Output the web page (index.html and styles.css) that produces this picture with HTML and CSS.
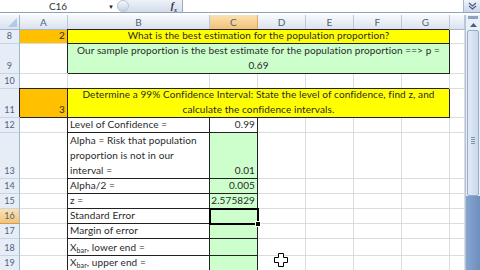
FILE: index.html
```html
<!DOCTYPE html>
<html lang="en">
<head>
    <meta charset="UTF-8">
    <title>Confidence Interval - Excel</title>
    <link rel="stylesheet" href="styles.css">
</head>
<body>
    <div class="window">
        <div class="formula-bar">
            <div class="name-box">
                <span class="name">C16</span>
                <span class="drop">&#9660;</span>
            </div>
            <div class="fx-group">
                <span class="grip"></span>
                <span class="fx">f<sub>x</sub></span>
            </div>
            <div class="formula-input"></div>
            <div class="expand">
                <svg width="9" height="8" viewBox="0 0 9 8"><path d="M1 1l3.5 3 3.5-3M1 4l3.5 3 3.5-3" fill="none" stroke="#4a5f7e" stroke-width="1.2"/></svg>
            </div>
        </div>

        <div class="workarea">
            <div class="sheet">
                <!-- column headers -->
                <div class="corner"></div>
                <div class="ch">A</div>
                <div class="ch">B</div>
                <div class="ch sel">C</div>
                <div class="ch">D</div>
                <div class="ch">E</div>
                <div class="ch">F</div>
                <div class="ch">G</div>
                <div class="ch"></div>

                <!-- row 8 -->
                <div class="rh">8</div>
                <div class="c orange num">2</div>
                <div class="c yellow merged center"><span>What is the best estimation for the population proportion?</span></div>
                <div class="c"></div>

                <!-- row 9 -->
                <div class="rh">9</div>
                <div class="c"></div>
                <div class="c green merged center"><span>Our sample proportion is the best estimate for the population proportion ==&gt; p =<br>0.69</span></div>
                <div class="c"></div>

                <!-- row 10 -->
                <div class="rh">10</div>
                <div class="c"></div><div class="c"></div><div class="c"></div><div class="c"></div>
                <div class="c"></div><div class="c"></div><div class="c"></div><div class="c"></div>

                <!-- row 11 -->
                <div class="rh">11</div>
                <div class="c orange num boxed">3</div>
                <div class="c yellow merged center"><span>Determine a 99% Confidence Interval: State the level of confidence, find z, and<br>calculate the confidence intervals.</span></div>
                <div class="c"></div>

                <!-- row 12 -->
                <div class="rh">12</div>
                <div class="c"></div>
                <div class="c boxed">Level of Confidence =</div>
                <div class="c boxed num">0.99</div>
                <div class="c"></div><div class="c"></div><div class="c"></div><div class="c"></div><div class="c"></div>

                <!-- row 13 -->
                <div class="rh">13</div>
                <div class="c"></div>
                <div class="c boxed"><span>Alpha = Risk that population<br>proportion is not in our<br>interval =</span></div>
                <div class="c boxed green num">0.01</div>
                <div class="c"></div><div class="c"></div><div class="c"></div><div class="c"></div><div class="c"></div>

                <!-- row 14 -->
                <div class="rh">14</div>
                <div class="c"></div>
                <div class="c boxed">Alpha/2 =</div>
                <div class="c boxed green num">0.005</div>
                <div class="c"></div><div class="c"></div><div class="c"></div><div class="c"></div><div class="c"></div>

                <!-- row 15 -->
                <div class="rh">15</div>
                <div class="c"></div>
                <div class="c boxed">z =</div>
                <div class="c boxed green num">2.575829</div>
                <div class="c"></div><div class="c"></div><div class="c"></div><div class="c"></div><div class="c"></div>

                <!-- row 16 -->
                <div class="rh sel">16</div>
                <div class="c"></div>
                <div class="c boxed">Standard Error</div>
                <div class="c boxed green active"></div>
                <div class="c"></div><div class="c"></div><div class="c"></div><div class="c"></div><div class="c"></div>

                <!-- row 17 -->
                <div class="rh">17</div>
                <div class="c"></div>
                <div class="c boxed">Margin of error</div>
                <div class="c boxed green"></div>
                <div class="c"></div><div class="c"></div><div class="c"></div><div class="c"></div><div class="c"></div>

                <!-- row 18 -->
                <div class="rh">18</div>
                <div class="c"></div>
                <div class="c boxed"><span>X<sub>bar</sub>, lower end =</span></div>
                <div class="c boxed green"></div>
                <div class="c"></div><div class="c"></div><div class="c"></div><div class="c"></div><div class="c"></div>

                <!-- row 19 -->
                <div class="rh">19</div>
                <div class="c"></div>
                <div class="c boxed"><span>X<sub>bar</sub>, upper end =</span></div>
                <div class="c boxed green"></div>
                <div class="c"></div><div class="c"></div><div class="c"></div><div class="c"></div><div class="c"></div>
            </div>

            <div class="vscroll">
                <div class="split"></div>
                <div class="arrow-up">
                    <svg width="7" height="4" viewBox="0 0 7 4"><path d="M0 4L3.5 0 7 4z" fill="#4a5f7e"/></svg>
                </div>
                <div class="thumb"><span class="grip-lines"></span></div>
                <div class="track"></div>
            </div>
        </div>

        <svg class="cursor" width="14" height="14" viewBox="0 0 14 14">
            <path d="M4.5 0.5h5v4h4v5h-4v4h-5v-4h-4v-5h4z" fill="#fff" stroke="#000" stroke-width="1"/>
        </svg>
    </div>
</body>
</html>
```

FILE: styles.css
```css
body {
    margin: 0;
    background-color: #fff;
    font-family: Lato, "Liberation Sans", sans-serif;
    color: #2a2a2a;
}
.window {
    position: relative;
    width: 480px;
    height: 270px;
    overflow: hidden;
}

/* formula bar across the top */
.formula-bar {
    display: flex;
    height: 12px;
    border-bottom: 1px solid #8ea3bf;
    background-color: #fff;
}
.name-box {
    width: 117px;
    display: flex;
    align-items: center;
    font-size: 10px;
    color: #333;
}
.name-box .name {
    flex: 1;
    text-align: center;
    padding-left: 8px;
}
.name-box .drop {
    font-size: 6px;
    color: #222;
    margin-right: 3px;
}
.fx-group {
    width: 65px;
    display: flex;
    align-items: center;
    justify-content: space-between;
    background: linear-gradient(#eef2f8, #d3dcea);
    border-radius: 6px 0 0 6px;
    border-right: 1px solid #9aaac2;
}
.grip {
    width: 12px;
    height: 12px;
    border-radius: 50%;
    background: linear-gradient(#f7f9fc, #c5d0e0);
    border: 1px solid #b8c4d6;
    box-sizing: border-box;
}
.fx {
    font-family: "Liberation Serif", serif;
    font-style: italic;
    font-weight: bold;
    font-size: 10px;
    color: #333;
    margin-right: 5px;
}
.fx sub {
    font-size: 6px;
}
.formula-input {
    flex: 1;
    background-color: #fff;
}
.expand {
    width: 16px;
    display: flex;
    align-items: center;
    justify-content: center;
    background: linear-gradient(#eef3fa, #c9d7ea);
    border-left: 1px solid #a5b6cd;
}

/* grid area */
.workarea {
    display: flex;
    margin-top: 2px;
}
.sheet {
    display: grid;
    grid-template-columns: 20px 48px 142px 48px 48px 48px 48px 48px 15px;
    grid-template-rows: 15px 14px 30px 15px 29px 15px 46px 15px 15px 15px 15px 17px 15px;
    font-size: 10px;
    line-height: 15px;
    letter-spacing: 0.1px;
}
.corner {
    background: linear-gradient(#f3f6fb, #d9e2ee);
    border-right: 1px solid #9eb6ce;
    border-bottom: 1px solid #9eb6ce;
    position: relative;
}
.corner::after {
    content: "";
    position: absolute;
    right: 2px;
    bottom: 2px;
    border-left: 9px solid transparent;
    border-bottom: 9px solid #b6c9e2;
}
.ch {
    display: flex;
    align-items: center;
    justify-content: center;
    background: linear-gradient(#f7f9fc, #dbe3ef);
    border-right: 1px solid #b9c8db;
    border-bottom: 1px solid #9eb6ce;
    color: #50627f;
    font-size: 10px;
}
.ch.sel {
    background: linear-gradient(#fbe2b0, #f3c27a);
    border-right-color: #e3a95c;
    border-bottom-color: #d99a45;
}
.rh {
    display: flex;
    align-items: flex-end;
    justify-content: center;
    background-color: #e6edf7;
    border-right: 1px solid #9eb6ce;
    border-bottom: 1px solid #c7d4e5;
    color: #50627f;
    font-size: 9px;
    line-height: 14px;
}
.rh.sel {
    background: linear-gradient(#fbe2b0, #f3c27a);
    border-bottom-color: #d99a45;
}

/* cells */
.c {
    display: flex;
    align-items: flex-end;
    padding: 0 2px;
    border-right: 1px solid #dadcdd;
    border-bottom: 1px solid #dadcdd;
    white-space: nowrap;
    box-sizing: border-box;
}
.c sub {
    font-size: 7px;
    line-height: 0;
    vertical-align: -2px;
}
.merged {
    grid-column: span 6;
}
.center {
    justify-content: center;
    text-align: center;
}
.num {
    justify-content: flex-end;
}
.boxed,
.merged {
    border-right-color: #222;
    border-bottom-color: #222;
    box-shadow: -1px -1px 0 #222;
}
.orange {
    background-color: #ffc000;
}
.yellow {
    background-color: #ffff00;
}
.green {
    background-color: #ccffcc;
}
.active {
    position: relative;
    outline: 2px solid #000;
    outline-offset: -1px;
}
.active::after {
    content: "";
    position: absolute;
    right: -4px;
    bottom: -4px;
    width: 4px;
    height: 4px;
    background-color: #000;
    border: 1px solid #fff;
}

/* vertical scrollbar */
.vscroll {
    width: 15px;
    height: 255px;
    display: flex;
    flex-direction: column;
    background-color: #e9eff7;
    border-left: 1px solid #b3c3d8;
    box-sizing: border-box;
}
.split {
    height: 3px;
    margin: 1px 2px 0;
    background-color: #8da2bf;
}
.arrow-up {
    height: 11px;
    display: flex;
    align-items: center;
    justify-content: center;
}
.thumb {
    height: 164px;
    margin: 0 1px;
    background: linear-gradient(90deg, #e3ebf6, #c9d8ec);
    border: 1px solid #97acc9;
    border-radius: 2px;
    position: relative;
}
.grip-lines {
    position: absolute;
    left: 3px;
    right: 3px;
    top: 106px;
    height: 7px;
    background: repeating-linear-gradient(#7f93b1 0 1px, transparent 1px 2px);
}
.track {
    flex: 1;
    background: linear-gradient(90deg, #86a6d0, #6d8fbf);
}

/* mouse pointer */
.cursor {
    position: absolute;
    left: 274px;
    top: 253px;
}
```
